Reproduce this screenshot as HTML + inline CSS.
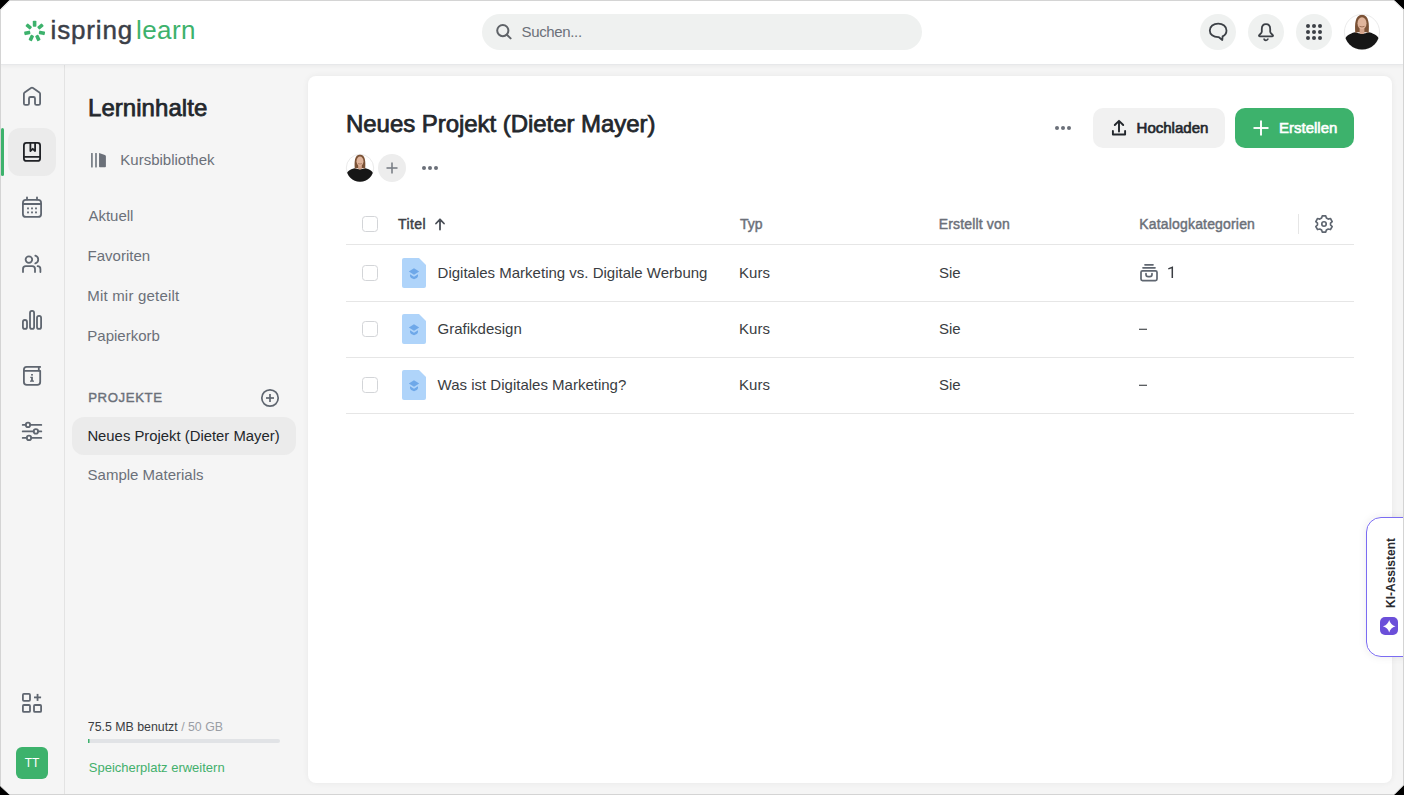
<!DOCTYPE html>
<html><head><meta charset="utf-8">
<style>
*{box-sizing:border-box;margin:0;padding:0}
html,body{width:1404px;height:795px;overflow:hidden;background:#f5f5f5}
body{font-family:"Liberation Sans",sans-serif;position:relative}
.b{position:absolute}
#header{left:0;top:0;width:1404px;height:64px;background:#fff;box-shadow:0 1px 0 #e7e8ea,0 2px 4px rgba(0,0,0,0.05)}
#railline{left:64px;top:64px;width:1px;height:731px;background:#e3e3e3}
#card{left:308px;top:76px;width:1084px;height:707px;background:#fff;border-radius:8px;box-shadow:0 0 6px rgba(0,0,0,0.06)}
svg{position:absolute;left:0;top:0}
text{font-family:"Liberation Sans",sans-serif}
.md{stroke-width:0.45px;paint-order:stroke}
</style></head><body>
<div class="b" id="railline"></div>
<div class="b" id="card"></div>
<div class="b" id="header"></div>
<div class="b" style="left:1366px;top:517px;width:60px;height:140px;border-radius:14px 0 0 14px;box-shadow:0 0 8px rgba(0,0,0,0.08)"></div>

<svg width="1404" height="795" viewBox="0 0 1404 795">
<!-- ===== HEADER ===== -->
<g fill="#3db26c">
<rect x="32.80" y="20.70" width="3.6" height="6" rx="0.9" transform="rotate(0.00 34.6 31.2)"/>
<rect x="32.80" y="20.70" width="3.6" height="6" rx="0.9" transform="rotate(51.43 34.6 31.2)"/>
<rect x="32.80" y="20.70" width="3.6" height="6" rx="0.9" transform="rotate(102.86 34.6 31.2)"/>
<rect x="32.80" y="20.70" width="3.6" height="6" rx="0.9" transform="rotate(154.29 34.6 31.2)"/>
<rect x="32.80" y="20.70" width="3.6" height="6" rx="0.9" transform="rotate(205.71 34.6 31.2)"/>
<rect x="32.80" y="20.70" width="3.6" height="6" rx="0.9" transform="rotate(257.14 34.6 31.2)"/>
<rect x="32.80" y="20.70" width="3.6" height="6" rx="0.9" transform="rotate(308.57 34.6 31.2)"/>
</g>
<text x="50.5" y="38.8" font-size="26" fill="#3b4048" stroke="#3b4048" stroke-width="0.45" letter-spacing="0.85">ispring</text>
<text x="136" y="38.8" font-size="26" fill="#3db26c" letter-spacing="0.4">learn</text>

<!-- search -->
<rect x="482" y="14" width="440" height="36" rx="18" fill="#eff1f0"/>
<circle cx="502.8" cy="30.6" r="5.6" fill="none" stroke="#5f6368" stroke-width="2"/>
<line x1="506.9" y1="34.7" x2="510.6" y2="38.4" stroke="#5f6368" stroke-width="2" stroke-linecap="round"/>
<text x="521.5" y="36.6" font-size="15" fill="#6b7079" letter-spacing="-0.35">Suchen...</text>

<!-- header buttons -->
<circle cx="1218" cy="32" r="18" fill="#eff1f0"/>
<circle cx="1266" cy="32" r="18" fill="#eff1f0"/>
<circle cx="1314" cy="32" r="18" fill="#eff1f0"/>
<path d="M1222.6,36.4 C1225.3,35 1226.5,32.8 1226.5,30.4 C1226.5,26.4 1222.9,23.6 1218.2,23.6 C1213.4,23.6 1209.8,26.4 1209.8,30.4 C1209.8,34.4 1213.3,37.2 1218.2,37.2 L1218.9,37.2 L1222.3,40 Z" fill="none" stroke="#3c4046" stroke-width="1.8" stroke-linejoin="round"/>
<path d="M1266,24.1 C1263.3,24.1 1261.8,26.3 1261.8,29 V31.8 C1261.8,33 1260.2,34 1259.4,34.8 C1258.6,35.6 1259,36.3 1260,36.3 H1272 C1273,36.3 1273.4,35.6 1272.6,34.8 C1271.8,34 1270.2,33 1270.2,31.8 V29 C1270.2,26.3 1268.7,24.1 1266,24.1 Z" fill="none" stroke="#3c4046" stroke-width="1.8" stroke-linejoin="round"/>
<path d="M1264.1,38.4 A1.9,1.9 0 0 0 1267.9,38.4" fill="none" stroke="#3c4046" stroke-width="1.7"/>
<g fill="#3c4046">
<circle cx="1308" cy="25.9" r="2"/><circle cx="1314" cy="25.9" r="2"/><circle cx="1320" cy="25.9" r="2"/>
<circle cx="1308" cy="31.9" r="2"/><circle cx="1314" cy="31.9" r="2"/><circle cx="1320" cy="31.9" r="2"/>
<circle cx="1308" cy="37.9" r="2"/><circle cx="1314" cy="37.9" r="2"/><circle cx="1320" cy="37.9" r="2"/>
</g>
<!-- avatar -->
<defs>
<g id="person">
<path d="M0,36 L0,28 C1,22.5 5,19.8 11,18.3 Q18,20.8 25,18.3 C31,19.8 35,22.5 36,28 L36,36 Z" fill="#161616"/>
<path d="M11.3,19 C10.6,10 11,1.2 18,0.8 C25,1.2 25.4,10 24.7,19 L22,18.3 L14,18.3 Z" fill="#7b5236"/>
<path d="M15.6,13 H20.4 V19.4 Q18,20.6 15.6,19.4 Z" fill="#d4a48b"/>
<ellipse cx="18" cy="9.3" rx="4.5" ry="6.1" fill="#e0b59c"/>
<path d="M15.5,12.3 Q18,13.6 20.5,12.3" fill="none" stroke="#9a6a50" stroke-width="0.9"/>
</g>
<clipPath id="avclip" clipPathUnits="userSpaceOnUse"><circle cx="18" cy="18" r="17.6"/></clipPath>
</defs>
<g transform="translate(1344 14)">
<circle cx="18" cy="18" r="17.6" fill="#fff" stroke="#e4e4e4" stroke-width="0.8"/>
<g clip-path="url(#avclip)"><use href="#person"/></g>
</g>
<!-- ===== LEFT RAIL ===== -->
<rect x="1" y="128" width="3" height="48" rx="1.5" fill="#3db26c"/>
<rect x="8" y="128" width="48" height="48" rx="12" fill="#ebebeb"/>
<g fill="none" stroke="#5f6670" stroke-width="1.8" stroke-linejoin="round" stroke-linecap="round">
<!-- home -->
<path d="M23.9,103.4 V93.8 Q23.9,92.9 24.6,92.4 L31,88 Q32,87.3 33,88 L39.4,92.4 Q40.1,92.9 40.1,93.8 V103.4 Q40.1,104.9 38.6,104.9 H36.5 Q35,104.9 35,103.4 V98.5 Q35,97 33.5,97 H30.5 Q29,97 29,98.5 V103.4 Q29,104.9 27.5,104.9 H25.4 Q23.9,104.9 23.9,103.4 Z"/>
<!-- calendar -->
<rect x="22.9" y="199.9" width="18.2" height="17" rx="3"/>
<line x1="23" y1="204" x2="41" y2="204"/>
<line x1="27" y1="197.5" x2="27" y2="199.5"/>
<line x1="37" y1="197.5" x2="37" y2="199.5"/>
<!-- people -->
<circle cx="28.9" cy="259.6" r="3.3"/>
<path d="M35.3,255.7 A4,4 0 0 1 35.3,263.4"/>
<path d="M23,272 V269 A2.8,2.8 0 0 1 25.8,266.2 H32.2 A2.8,2.8 0 0 1 35,269 V272"/>
<path d="M37.6,266.2 A2.8,2.8 0 0 1 40.4,269 V272"/>
<!-- chart -->
<rect x="22.9" y="320" width="4.1" height="8.9" rx="2"/>
<rect x="30" y="310.9" width="4.1" height="18" rx="2"/>
<rect x="37" y="315.9" width="4.1" height="13" rx="2"/>
<!-- info book -->
<path d="M40.2,366.9 H26.6 A2.8,2.8 0 0 0 23.9,369.7 V382 A2.9,2.9 0 0 0 26.8,384.9 H37.3 A2.9,2.9 0 0 0 40.2,382 V370.8 H23.9"/>
<line x1="38.8" y1="367" x2="38.8" y2="370.5"/>
<!-- sliders -->
<line x1="22.7" y1="424.9" x2="25.8" y2="424.9"/><line x1="30.2" y1="424.9" x2="41.3" y2="424.9"/>
<circle cx="28" cy="424.9" r="2.2"/>
<line x1="22.7" y1="431.4" x2="33.7" y2="431.4"/><line x1="38.1" y1="431.4" x2="41.3" y2="431.4"/>
<circle cx="35.9" cy="431.4" r="2.2"/>
<line x1="22.7" y1="437.9" x2="26.8" y2="437.9"/><line x1="31.2" y1="437.9" x2="41.3" y2="437.9"/>
<circle cx="29" cy="437.9" r="2.2"/>
<!-- apps add -->
<rect x="22.9" y="693.9" width="7.1" height="6.9" rx="1"/>
<rect x="22.9" y="705" width="7.1" height="6.9" rx="1"/>
<rect x="34" y="705" width="7.1" height="6.9" rx="1"/>
<line x1="37.55" y1="693.9" x2="37.55" y2="700.9" stroke-linecap="butt"/><line x1="34" y1="697.4" x2="41.1" y2="697.4" stroke-linecap="butt"/>
</g>
<g fill="#5f6670"><rect x="27.1" y="207.5" width="1.8" height="1.8"/><rect x="31.1" y="207.5" width="1.8" height="1.8"/><rect x="35.1" y="207.5" width="1.8" height="1.8"/>
<rect x="27.1" y="211.5" width="1.8" height="1.8"/><rect x="31.1" y="211.5" width="1.8" height="1.8"/><rect x="35.1" y="211.5" width="1.8" height="1.8"/>
<rect x="31.1" y="374" width="1.8" height="1.6"/><path d="M30.3,376.8 H32.9 V380.5 H34 V381.8 H30 V380.5 H31.1 V378 H30.3 Z"/></g>
<!-- book active -->
<g fill="none" stroke="#202226" stroke-width="1.8" stroke-linejoin="round" stroke-linecap="round">
<rect x="23.9" y="142.9" width="16.2" height="18" rx="2.5"/>
<line x1="24" y1="156.9" x2="40" y2="156.9"/>
<path d="M30.4,143 V151 L32.75,148.8 L35.1,151 V143"/>
</g>
<!-- TT -->
<rect x="16" y="747" width="32" height="32" rx="6" fill="#3db26c"/>
<text x="32" y="767.2" font-size="12" fill="#fff" text-anchor="middle">TT</text>

<!-- ===== SIDEBAR ===== -->
<text x="88" y="115.7" font-size="24" fill="#23272c" stroke="#23272c" stroke-width="0.75" letter-spacing="0.05">Lerninhalte</text>
<g fill="#7c828a"><rect x="91" y="153" width="1.8" height="14.4" rx="0.3"/><rect x="95.1" y="153" width="1.8" height="14.4" rx="0.3"/></g><path d="M99.05,153 L104.9,155.1 Q105.9,155.5 105.9,156.5 V166.5 Q105.9,167.3 105.1,167.3 H99.8 Q99.05,167.3 99.05,166.5 Z" fill="#6b7079"/>
<text x="120.3" y="164.9" font-size="15" fill="#6b7079">Kursbibliothek</text>
<g font-size="15" fill="#6b7079">
<text x="88.4" y="220.8">Aktuell</text>
<text x="87.6" y="260.8">Favoriten</text>
<text x="87.2" y="300.8" letter-spacing="0.2">Mit mir geteilt</text>
<text x="87.3" y="340.8">Papierkorb</text>
</g>
<text x="88.2" y="402.3" font-size="13.2" fill="#6b7079" stroke="#6b7079" stroke-width="0.4" letter-spacing="0.6">PROJEKTE</text>
<circle cx="270" cy="398" r="8.2" fill="none" stroke="#5f6670" stroke-width="1.7"/>
<line x1="270" y1="394" x2="270" y2="402" stroke="#5f6670" stroke-width="1.7"/><line x1="266" y1="398" x2="274" y2="398" stroke="#5f6670" stroke-width="1.7"/>
<rect x="72" y="417" width="224" height="38" rx="12" fill="#ebebeb"/>
<text x="87.4" y="440.8" font-size="14.85" fill="#23272c">Neues Projekt (Dieter Mayer)</text>
<text x="87.6" y="480.3" font-size="15" fill="#6b7079">Sample Materials</text>
<text x="87.8" y="730.6" font-size="12.35" fill="#3a3d42">75.5 MB benutzt <tspan fill="#9a9ea5">/ 50 GB</tspan></text>
<rect x="88" y="739" width="192" height="4" rx="2" fill="#e1e3e6"/>
<rect x="88" y="739" width="1.5" height="4" fill="#3db26c"/>
<text x="88.8" y="771.6" font-size="13" fill="#43b06c">Speicherplatz erweitern</text>

<!-- ===== MAIN CARD ===== -->
<text x="346" y="132" font-size="24" fill="#23272c" stroke="#23272c" stroke-width="0.75" letter-spacing="-0.05">Neues Projekt (Dieter Mayer)</text>
<!-- small avatar -->
<g transform="translate(346 154) scale(0.7778)">
<circle cx="18" cy="18" r="17.6" fill="#fff" stroke="#e4e4e4" stroke-width="1"/>
<g clip-path="url(#avclip)"><use href="#person"/></g>
</g>
<circle cx="392" cy="168" r="14" fill="#ededed"/>
<line x1="392" y1="162.5" x2="392" y2="173.5" stroke="#7a7f86" stroke-width="1.6"/><line x1="386.5" y1="168" x2="397.5" y2="168" stroke="#7a7f86" stroke-width="1.6"/>
<g fill="#6b7079"><circle cx="424" cy="168" r="2"/><circle cx="430" cy="168" r="2"/><circle cx="436" cy="168" r="2"/>
<circle cx="1057" cy="128" r="2"/><circle cx="1063" cy="128" r="2"/><circle cx="1069" cy="128" r="2"/></g>

<rect x="1093" y="108" width="132" height="40" rx="10" fill="#f1f1f1"/>
<g fill="none" stroke="#23272c" stroke-width="1.9" stroke-linecap="round" stroke-linejoin="round">
<path d="M1119,121 V131.5 M1114.8,125 L1119,120.8 L1123.2,125"/>
<path d="M1112.9,131 V134.5 H1125.1 V131"/>
</g>
<text x="1136.6" y="132.8" font-size="15" fill="#23272c" stroke="#23272c" class="md" style="stroke-width:0.65px">Hochladen</text>
<rect x="1235" y="108" width="119" height="40" rx="10" fill="#3db26c"/>
<line x1="1261" y1="120.5" x2="1261" y2="135.5" stroke="#fff" stroke-width="1.9"/><line x1="1253.5" y1="128" x2="1268.5" y2="128" stroke="#fff" stroke-width="1.9"/>
<text x="1279" y="132.8" font-size="15" fill="#fff" stroke="#fff" class="md" style="stroke-width:0.6px">Erstellen</text>

<!-- table header -->
<rect x="362.5" y="216.5" width="15" height="15" rx="3" fill="#fff" stroke="#d3d5d8"/>
<text x="398" y="228.9" font-size="14" fill="#3c4046" stroke="#3c4046" class="md" letter-spacing="0.4">Titel</text>
<g fill="none" stroke="#4a4f57" stroke-width="1.8" stroke-linecap="round" stroke-linejoin="round"><path d="M440,219.5 V229.5 M436,223.5 L440,219.3 L444,223.5"/></g>
<g font-size="14" fill="#6b7079" stroke="#6b7079" class="md">
<text x="739.9" y="229.2">Typ</text>
<text x="938.8" y="229.2" letter-spacing="0.15">Erstellt von</text>
<text x="1139.3" y="229.2" letter-spacing="0.17">Katalogkategorien</text>
</g>
<line x1="1298.5" y1="214" x2="1298.5" y2="234" stroke="#e6e6e6"/>
<g transform="translate(1324 224) scale(0.92)" fill="none" stroke="#5f6670" stroke-width="1.8" stroke-linejoin="round">
<path d="M-1.9,-8.3 H1.9 L2.6,-6 L4.6,-4.9 L7,-5.5 L8.9,-2.2 L7.1,-0.5 L7.1,1.5 L8.9,3.2 L7,6.5 L4.6,5.9 L2.6,7 L1.9,9.2 H-1.9 L-2.6,7 L-4.6,5.9 L-7,6.5 L-8.9,3.2 L-7.1,1.5 L-7.1,-0.5 L-8.9,-2.2 L-7,-5.5 L-4.6,-4.9 L-2.6,-6 Z" transform="translate(0 -0.45)"/>
<circle cx="0" cy="0" r="2.4"/>
</g>
<g stroke="#e6e6e6"><line x1="346" y1="244.5" x2="1354" y2="244.5"/><line x1="346" y1="301.5" x2="1354" y2="301.5"/><line x1="346" y1="357.5" x2="1354" y2="357.5"/><line x1="346" y1="413.5" x2="1354" y2="413.5"/></g>

<!-- rows -->
<g fill="#fff" stroke="#d3d5d8">
<rect x="362.5" y="265.5" width="15" height="15" rx="3"/>
<rect x="362.5" y="321.5" width="15" height="15" rx="3"/>
<rect x="362.5" y="377.5" width="15" height="15" rx="3"/>
</g>
<defs>
<g id="file">
<path d="M2,0 H17 L24,7 V28 A2,2 0 0 1 22,30 H2 A2,2 0 0 1 0,28 V2 A2,2 0 0 1 2,0 Z" fill="#afd4fa"/>
<path d="M12,10.2 L17.2,13.5 L12,16.8 L6.8,13.5 Z" fill="#6ea8e9"/>
<path d="M8,16.3 L12,18.8 L16,16.3 V17.8 Q16,19.2 14.8,19.9 L12,21.2 L9.2,19.9 Q8,19.2 8,17.8 Z" fill="#6ea8e9"/>
</g>
</defs>
<use href="#file" x="402" y="258"/>
<use href="#file" x="402" y="314"/>
<use href="#file" x="402" y="370"/>
<g font-size="15" fill="#3a3d42">
<text x="437.6" y="277.7">Digitales Marketing vs. Digitale Werbung</text>
<text x="437.6" y="333.7">Grafikdesign</text>
<text x="437.6" y="389.7">Was ist Digitales Marketing?</text>
<text x="739.1" y="277.7">Kurs</text><text x="739.1" y="333.7">Kurs</text><text x="739.1" y="389.7">Kurs</text>
<text x="938.9" y="277.7">Sie</text><text x="938.9" y="333.7">Sie</text><text x="938.9" y="389.7">Sie</text>
</g>
<path d="M1168.3,268.9 L1172.3,267.4 V277.9" fill="none" stroke="#3a3d42" stroke-width="1.5"/>
<rect x="1139" y="328.7" width="8" height="1.2" fill="#4a4d52"/>
<rect x="1139" y="384.7" width="8" height="1.2" fill="#4a4d52"/>
<!-- catalog icon -->
<g fill="none" stroke="#5f6670" stroke-width="1.7" stroke-linecap="round" stroke-linejoin="round">
<line x1="1145" y1="264.8" x2="1153" y2="264.8"/>
<line x1="1143" y1="267.8" x2="1155" y2="267.8"/>
<rect x="1141" y="270.8" width="16" height="9.8" rx="1.5"/>
<path d="M1146,273.6 V274.5 Q1146,276.6 1148.2,276.6 H1149.8 Q1152,276.6 1152,274.5 V273.6"/>
</g>

<!-- KI tab -->
<path d="M1404,517.5 H1381 A14.5,14.5 0 0 0 1366.5,532 V642 A14.5,14.5 0 0 0 1381,656.5 H1404" fill="#fff" stroke="#7b6cf2" stroke-width="1"/>
<text transform="translate(1395 608) rotate(-90)" font-size="12" font-weight="bold" fill="#2a2b2f">KI-Assistent</text>
<rect x="1380" y="617" width="18" height="18" rx="5" fill="#6b4fd9"/>
<path d="M1389.2,619.9 Q1390.5,624.9 1395.5,626.2 Q1390.5,627.5 1389.2,632.5 Q1387.9,627.5 1382.9,626.2 Q1387.9,624.9 1389.2,619.9 Z" fill="#fff"/>

<!-- frame -->
<rect x="0.5" y="0.5" width="1403" height="794" fill="none" stroke="#d4d4d4" stroke-width="1"/>
<g fill="#000">
<path d="M0,0 H9.5 L0,9.5 Z"/><path d="M1394,0 H1404 V9.5 Z"/>
<path d="M0,786 V795 H10 Z"/><path d="M1404,785 V795 H1394 Z"/>
</g>
<g stroke="#d8d8d8" stroke-width="1" fill="none"><path d="M10,0.5 L0.5,10"/><path d="M1394,0.5 L1403.5,10"/><path d="M0.5,786 L9.5,794.5"/><path d="M1403.5,785 L1394,794.5"/></g>
</svg>
</body></html>
